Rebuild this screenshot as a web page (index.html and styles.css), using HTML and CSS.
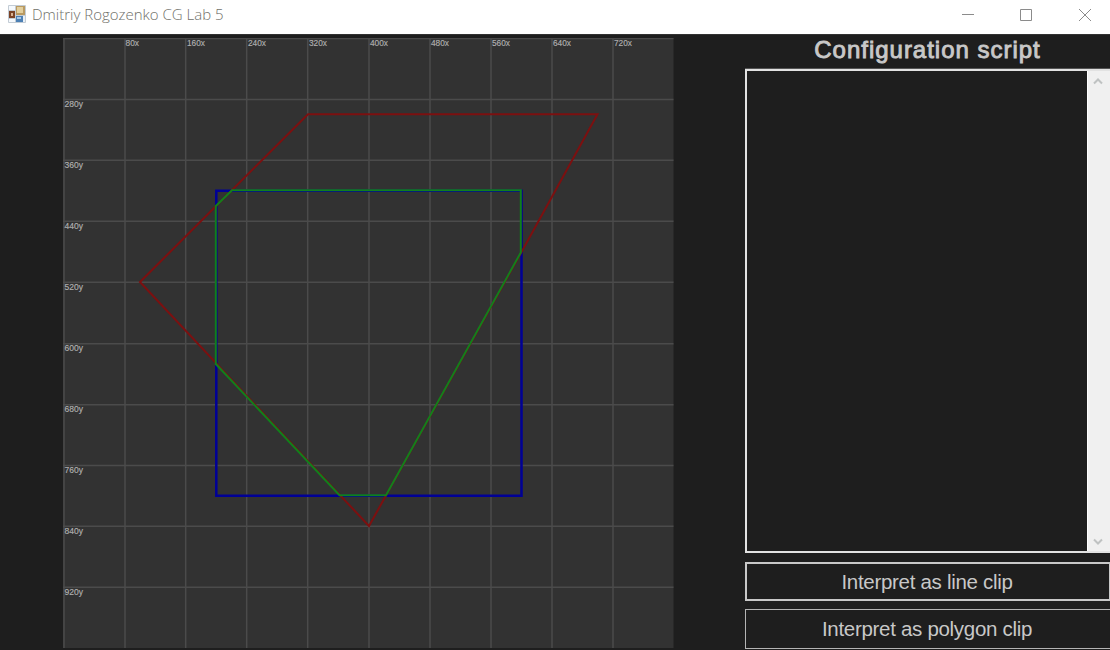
FILE: index.html
```html
<!DOCTYPE html>
<html lang="en">
<head>
<meta charset="utf-8">
<title>Dmitriy Rogozenko CG Lab 5</title>
<link rel="stylesheet" href="styles.css">
</head>
<body>
<div class="window">
  <header class="titlebar">
    <svg class="app-icon" width="18" height="18" viewBox="0 0 18 18">
      <rect width="18" height="18" rx="1" fill="#c3ccd5"/>
      <rect x="1" y="1" width="6" height="4" fill="#f5f9fd"/>
      <rect x="8" y="1" width="9" height="9" fill="#b99a62"/>
      <rect x="9" y="2" width="6" height="6" fill="#e3cf9d"/>
      <rect x="1" y="6" width="6" height="7" fill="#7b4326"/>
      <rect x="3" y="8" width="2" height="3" fill="#d9b292"/>
      <rect x="1" y="14" width="6" height="3" fill="#f5f9fd"/>
      <rect x="8" y="11" width="7" height="6" fill="#4c80b5"/>
      <rect x="9" y="12" width="4" height="2" fill="#a9c9e8"/>
      <rect x="15" y="11" width="2" height="6" fill="#e9f0f6"/>
    </svg>
    <span class="title">Dmitriy Rogozenko CG Lab 5</span>
    <svg class="controls" width="150" height="34" viewBox="960 0 150 34" fill="none" stroke="#8b8b8b">
      <path d="M962 14.500h12M1020.500 9.500h11v11h-11z"/>
      <path d="M1079 9l12 12M1091 9l-12 12"/>
    </svg>
  </header>
  <main class="content">
    <svg class="plot" width="611" height="611" viewBox="63 38 611 611">
      <rect x="63" y="38" width="610.500" height="610" fill="#323232"/>
      <g class="grid">
        <path d="M64 38V648M125 38V648M185.700 38V648M246.700 38V648M307.700 38V648M369 38V648M430 38V648M491 38V648M552 38V648M613 38V648"/>
        <path d="M63 38.500H673.500M63 99.500H673.500M63 160.300H673.500M63 221.300H673.500M63 282.300H673.500M63 343.700H673.500M63 404.700H673.500M63 465.500H673.500M63 526.300H673.500M63 587.300H673.500"/>
      </g>
      <g class="ticks">
        <text x="125.500" y="46" textLength="13.500" lengthAdjust="spacingAndGlyphs">80x</text>
        <text x="187" y="46" textLength="18" lengthAdjust="spacingAndGlyphs">160x</text>
        <text x="248" y="46" textLength="18" lengthAdjust="spacingAndGlyphs">240x</text>
        <text x="309" y="46" textLength="18" lengthAdjust="spacingAndGlyphs">320x</text>
        <text x="370" y="46" textLength="18" lengthAdjust="spacingAndGlyphs">400x</text>
        <text x="431" y="46" textLength="18" lengthAdjust="spacingAndGlyphs">480x</text>
        <text x="492" y="46" textLength="18" lengthAdjust="spacingAndGlyphs">560x</text>
        <text x="553" y="46" textLength="18" lengthAdjust="spacingAndGlyphs">640x</text>
        <text x="614" y="46" textLength="18" lengthAdjust="spacingAndGlyphs">720x</text>
        <text x="64.500" y="107" textLength="18.500" lengthAdjust="spacingAndGlyphs">280y</text>
        <text x="64.500" y="168" textLength="18.500" lengthAdjust="spacingAndGlyphs">360y</text>
        <text x="64.500" y="229" textLength="18.500" lengthAdjust="spacingAndGlyphs">440y</text>
        <text x="64.500" y="290" textLength="18.500" lengthAdjust="spacingAndGlyphs">520y</text>
        <text x="64.500" y="351" textLength="18.500" lengthAdjust="spacingAndGlyphs">600y</text>
        <text x="64.500" y="412" textLength="18.500" lengthAdjust="spacingAndGlyphs">680y</text>
        <text x="64.500" y="473" textLength="18.500" lengthAdjust="spacingAndGlyphs">760y</text>
        <text x="64.500" y="534" textLength="18.500" lengthAdjust="spacingAndGlyphs">840y</text>
        <text x="64.500" y="595" textLength="18.500" lengthAdjust="spacingAndGlyphs">920y</text>
      </g>
      <path class="clip-window" d="M216.300 190.700H521.500V495.700H216.300Z"/>
      <path class="subject" d="M140 282L308 114.200H597.500L521.500 252L369 526Z"/>
      <path class="result" d="M215.800 206L232 190.200H520.800V252.500L386 495.200H339.500L215.800 364Z"/>
    </svg>
    <aside class="panel">
      <h1 class="heading">Configuration script</h1>
      <div class="editor">
        <div class="editor-area"></div>
        <div class="scrollbar">
          <svg class="arrow" width="10" height="8" viewBox="0 0 10 8"><path d="M1 6.500L5 2.500L9 6.500"/></svg>
          <svg class="arrow" width="10" height="8" viewBox="0 0 10 8"><path d="M1 1.500L5 5.500L9 1.500"/></svg>
        </div>
      </div>
      <button class="button button-focused">Interpret as line clip</button>
      <button class="button">Interpret as polygon clip</button>
    </aside>
  </main>
</div>
</body>
</html>
```
FILE: styles.css
```css
* { box-sizing: border-box; }
body { margin: 0; background: #1e1e1e; overflow: hidden; }
.window {
  width: 1110px;
  height: 650px;
  display: flex;
  flex-direction: column;
  overflow: hidden;
  font-family: "Liberation Sans", Arial, sans-serif;
}
.titlebar {
  flex: 0 0 34px;
  display: flex;
  align-items: flex-start;
  background: #fff;
}
.app-icon { margin: 5px 6px 0 8px; }
.title {
  flex: 1;
  font: 300 15px/28px "Open Sans", "Noto Sans", sans-serif;
  color: #70706a;
  white-space: nowrap;
}
.content {
  flex: 1;
  min-height: 0;
  display: flex;
  justify-content: space-between;
  padding-left: 63px;
  background: #1e1e1e;
  border-top: 1px solid #323232;
}
.plot { display: block; margin-top: 3px; flex: none; }
.grid { stroke: #4b4b4b; stroke-width: 1.500; }
.ticks {
  font: 8.500px "Liberation Sans", Arial, sans-serif;
  fill: #b0b0b0;
  stroke: #b0b0b0;
  stroke-width: 0.150;
}
.clip-window, .subject, .result { fill: none; }
.clip-window { stroke: #000096; stroke-width: 2.500; }
.subject { stroke: #7c1010; stroke-width: 2; }
.result { stroke: #10801c; stroke-width: 2; }
.panel {
  flex: 0 0 365px;
  display: flex;
  flex-direction: column;
}
.heading {
  margin: 0;
  height: 34px;
  font-size: 24px;
  line-height: 29px;
  font-weight: normal;
  letter-spacing: 0.980px;
  -webkit-text-stroke: 0.900px #c8c8c8;
  color: #c8c8c8;
  text-align: center;
}
.editor {
  height: 484px;
  display: flex;
  border: 2px solid #e2e2e2;
  border-right: 0;
  box-shadow: 0 -1px #555;
}
.editor-area { flex: 1; }
.scrollbar {
  width: 23px;
  display: flex;
  flex-direction: column;
  justify-content: space-between;
  align-items: center;
  padding: 6px 3px 5px 0;
  background: #f0f0f0;
  border-left: 1px solid #fff;
}
.arrow { display: block; fill: none; stroke: #bfc2c2; stroke-width: 2; }
.button {
  height: 40px;
  margin: 8px 0 0;
  padding: 0 2px 0 0;
  border: 1px solid #b4b4b4;
  border-right: 0;
  background: #1e1e1e;
  color: #c8c8c8;
  font: 20.500px "Liberation Sans", Arial, sans-serif;
  letter-spacing: -0.300px;
}
.button-focused { height: 39px; margin-top: 9px; border: 2px solid #c8c8c8; border-right-width: 1px; }
```
